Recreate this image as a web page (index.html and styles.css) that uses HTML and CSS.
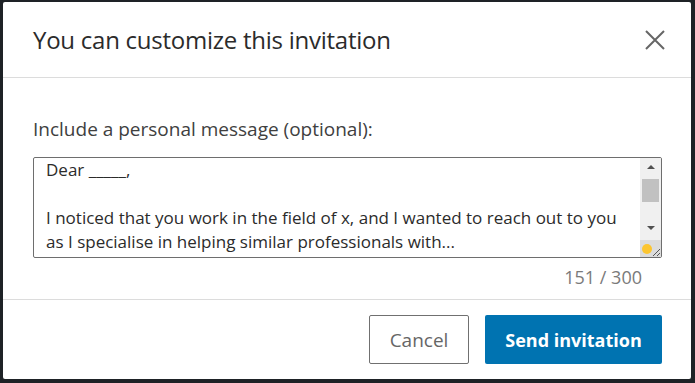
FILE: index.html
```html
<!DOCTYPE html>
<html lang="en">
<head>
<meta charset="utf-8">
<title>Invitation</title>
<link rel="stylesheet" href="styles.css">
</head>
<body>
<div class="page">
  <div class="dialog">
    <header class="dialog-header">
      <h2 class="title">You can customize this invitation</h2>
      <button class="close" aria-label="Dismiss">
        <svg width="24" height="24" viewBox="0 0 24 24"><path d="M3 3 L21 21 M21 3 L3 21" stroke="#666" stroke-width="2" fill="none"/></svg>
      </button>
    </header>
    <section class="dialog-body">
      <label class="label">Include a personal message (optional):</label>
      <div class="textbox">
        <div class="text">
          <div class="line">Dear _____,</div>
          <div class="line">&nbsp;</div>
          <div class="line">I noticed that you work in the field of x, and I wanted to reach out to you</div>
          <div class="line">as I specialise in helping similar professionals with...</div>
        </div>
        <div class="scrollbar">
          <div class="sb-arrow up"></div>
          <div class="sb-track"><div class="sb-thumb"></div></div>
          <div class="sb-arrow down"></div>
          <div class="sb-corner">
            <span class="dot"></span>
            <svg class="grip" width="10" height="10" viewBox="0 0 10 10"><path d="M9 2 L2 9 M9 6 L6 9" stroke="#555" stroke-width="1" fill="none"/></svg>
          </div>
        </div>
      </div>
      <div class="counter">151 / 300</div>
    </section>
    <footer class="dialog-footer">
      <button class="btn btn-secondary">Cancel</button>
      <button class="btn btn-primary">Send invitation</button>
    </footer>
  </div>
</div>
</body>
</html>
```
FILE: styles.css
```css
* { box-sizing: border-box; }
html, body { margin: 0; padding: 0; }
body {
  background: #1e2226;
  font-family: "Open Sans", "Noto Sans", sans-serif;
  width: 695px;
  height: 383px;
  overflow: hidden;
}
.page {
  padding: 2px 0 0 3px;
}
.dialog {
  width: 688px;
  height: 377px;
  background: #fff;
  border-radius: 2px;
  display: flex;
  flex-direction: column;
}
.dialog-header {
  height: 76px;
  border-bottom: 1px solid #dcdcdc;
  display: flex;
  align-items: center;
  justify-content: space-between;
  padding: 0 24px 0 30px;
}
.title {
  margin: 0;
  font-size: 24px;
  font-weight: 400;
  color: #2b2b2b;
  letter-spacing: -0.25px;
  line-height: 30px;
}
.close {
  border: 0;
  background: none;
  padding: 0;
  width: 24px;
  height: 24px;
  display: flex;
  margin-top: 1px;
}
.dialog-body {
  padding: 38px 29px 0 30px;
  height: 222px;
  border-bottom: 1px solid #dcdcdc;
}
.label {
  display: block;
  font-size: 19px;
  color: #404040;
  line-height: 26px;
  margin-bottom: 15px;
}
.textbox {
  height: 101px;
  border: 1px solid #6e6e6e;
  border-radius: 2px;
  display: flex;
  overflow: hidden;
}
.text {
  flex: 1;
  padding: 0 12px;
  font-size: 17px;
  line-height: 24px;
  color: #2b2b2b;
  white-space: nowrap;
  overflow: hidden;
}
.scrollbar {
  width: 21px;
  background: #f0f0f0;
  display: flex;
  flex-direction: column;
}
.sb-arrow {
  height: 17px;
  display: flex;
  align-items: center;
  justify-content: center;
}
.sb-arrow.up::before {
  content: "";
  border-left: 4px solid transparent;
  border-right: 4px solid transparent;
  border-bottom: 4px solid #505050;
}
.sb-arrow.down::before {
  content: "";
  border-left: 4px solid transparent;
  border-right: 4px solid transparent;
  border-top: 4px solid #505050;
}
.sb-track {
  height: 44px;
  padding: 4px 2px 0 2px;
}
.sb-thumb {
  height: 23px;
  background: #c1c1c1;
}
.sb-corner {
  flex: 1;
  background: #dcdcdc;
  position: relative;
  margin-top: 4px;
}
.dot {
  position: absolute;
  left: 2px;
  top: 4px;
  width: 10px;
  height: 10px;
  border-radius: 50%;
  background: #fcc52f;
}
.grip {
  position: absolute;
  right: 0;
  bottom: 0;
}
.counter {
  text-align: right;
  font-size: 18px;
  line-height: 24px;
  color: #7a7a7a;
  margin-top: 7px;
  padding-right: 20px;
}
.dialog-footer {
  flex: 1;
  display: flex;
  justify-content: flex-end;
  align-items: flex-start;
  gap: 16px;
  padding: 15px 29px 0 0;
}
.btn {
  height: 49px;
  font-family: "Open Sans", "Noto Sans", sans-serif;
  font-size: 19px;
  border-radius: 2px;
  cursor: pointer;
}
.btn-secondary {
  width: 100px;
  background: #fff;
  border: 1px solid #707070;
  color: #666;
}
.btn-primary {
  width: 177px;
  background: #0073b1;
  border: 0;
  color: #fff;
  font-weight: 700;
  font-size: 18px;
}
```
